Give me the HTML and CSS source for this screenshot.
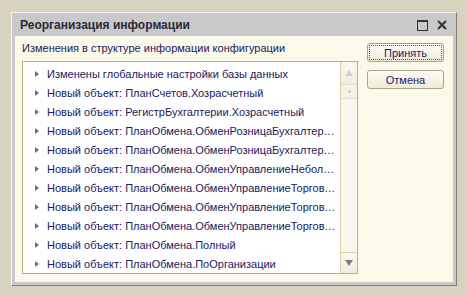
FILE: index.html
```html
<!DOCTYPE html>
<html lang="ru">
<head>
  <meta charset="UTF-8" />
  <title>Реорганизация информации</title>
  <link rel="stylesheet" href="styles.css">
</head>
<body>
<div class="window">
  <div class="titlebar">
    <span class="title">Реорганизация информации</span>
    <span class="title-btns">
      <svg width="11" height="11" viewBox="0 0 11 11"><rect x="0.5" y="0.5" width="10" height="10" fill="none" stroke="#333" stroke-width="1"/><line x1="0" y1="1.5" x2="11" y2="1.5" stroke="#333" stroke-width="1"/></svg>
      <svg width="10" height="10" viewBox="0 0 10 10"><path d="M1 1 L9 9 M9 1 L1 9" stroke="#333" stroke-width="2"/></svg>
    </span>
  </div>
  <div class="content">
    <div class="main-col">
      <div class="caption">Изменения в структуре информации конфигурации</div>
      <div class="listbox">
        <ul class="rows">
          <li><span class="arrow"></span><span class="txt">Изменены глобальные настройки базы данных</span></li>
          <li><span class="arrow"></span><span class="txt">Новый объект: ПланСчетов.Хозрасчетный</span></li>
          <li><span class="arrow"></span><span class="txt">Новый объект: РегистрБухгалтерии.Хозрасчетный</span></li>
          <li><span class="arrow"></span><span class="txt">Новый объект: ПланОбмена.ОбменРозницаБухгалтерияКОРП</span></li>
          <li><span class="arrow"></span><span class="txt">Новый объект: ПланОбмена.ОбменРозницаБухгалтерияПредприятия</span></li>
          <li><span class="arrow"></span><span class="txt">Новый объект: ПланОбмена.ОбменУправлениеНебольшойФирмой</span></li>
          <li><span class="arrow"></span><span class="txt">Новый объект: ПланОбмена.ОбменУправлениеТорговлей</span></li>
          <li><span class="arrow"></span><span class="txt">Новый объект: ПланОбмена.ОбменУправлениеТорговлейБухгалтерия</span></li>
          <li><span class="arrow"></span><span class="txt">Новый объект: ПланОбмена.ОбменУправлениеТорговлейРозница</span></li>
          <li><span class="arrow"></span><span class="txt">Новый объект: ПланОбмена.Полный</span></li>
          <li><span class="arrow"></span><span class="txt">Новый объект: ПланОбмена.ПоОрганизации</span></li>
        </ul>
        <div class="scrollbar">
          <div class="sb-btn sb-up"><span class="tri-up"></span></div>
          <div class="sb-thumb"><span class="dot"></span></div>
          <div class="sb-track"></div>
          <div class="sb-btn sb-down"><span class="tri-down"></span></div>
        </div>
      </div>
    </div>
    <div class="btn-col">
      <button class="btn default"><span>Принять</span></button>
      <button class="btn">Отмена</button>
    </div>
  </div>
</div>
</body>
</html>
```
FILE: styles.css
```css
body {
  margin: 0;
  background-color: #d7d3bf;
  font-family: Tahoma, "DejaVu Sans", "Liberation Sans", sans-serif;
  font-size: 11px;
}

.window {
  margin: 12px 0 0 11px;
  width: 446px;
  height: 274px;
  box-sizing: border-box;
  background-color: #c9c9c9;
  border-top: 1px solid #f4f4f4;
  border-left: 1px solid #f4f4f4;
  border-right: 1px solid #7f7f7f;
  border-bottom: 1px solid #7f7f7f;
  padding: 0 3px 3px 3px;
  display: flex;
  flex-direction: column;
}

.titlebar {
  height: 22px;
  display: flex;
  align-items: center;
  justify-content: space-between;
  padding: 1px 6px 0 5px;
}

.title {
  font-family: "Liberation Sans", Arial, sans-serif;
  font-weight: bold;
  font-size: 12px;
  color: #2a2a3a;
}

.title-btns {
  display: flex;
  align-items: center;
  gap: 9px;
}

.title-btns svg {
  display: block;
}

.content {
  flex: 1;
  background-color: #fbf9e9;
  display: flex;
  padding: 6px 8px 8px 7px;
  gap: 9px;
}

.main-col {
  width: 336px;
  display: flex;
  flex-direction: column;
}

.caption {
  font-family: "Liberation Sans", Arial, sans-serif;
  color: #20205e;
  line-height: 13px;
  height: 13px;
  margin-bottom: 6px;
}

.listbox {
  flex: 1;
  border: 1px solid #bdb07c;
  background: #ffffff;
  display: flex;
  min-height: 0;
}

.rows {
  list-style: none;
  margin: 0;
  padding: 2px 0 0 0;
  flex: 1;
  min-width: 0;
  overflow: hidden;
}

.rows li {
  height: 19px;
  display: flex;
  align-items: center;
  padding-left: 12px;
}

.arrow {
  width: 0;
  height: 0;
  border-top: 3px solid transparent;
  border-bottom: 3px solid transparent;
  border-left: 4px solid #4a76a8;
  margin-right: 8px;
  flex: none;
}

.txt {
  font-family: "Liberation Sans", Arial, sans-serif;
  color: #20205e;
  white-space: nowrap;
  overflow: hidden;
  text-overflow: ellipsis;
  padding-right: 2px;
}

.scrollbar {
  width: 16px;
  flex: none;
  border-left: 1px solid #d8cfaa;
  background: #f8f7f0;
  display: flex;
  flex-direction: column;
}

.sb-btn {
  background: linear-gradient(to bottom, #faf9f1, #f0eddc);
  display: flex;
  align-items: center;
  justify-content: center;
}

.sb-up {
  height: 22px;
  border-bottom: 1px solid #e4dfc6;
}

.sb-down {
  height: 20px;
  border-top: 1px solid #d8cfaa;
}

.sb-thumb {
  height: 13px;
  border-bottom: 1px solid #e4dfc6;
  background: #f4f2e6;
  display: flex;
  align-items: center;
  justify-content: center;
}

.dot {
  width: 3px;
  height: 3px;
  border-radius: 50%;
  background: #c9c6b8;
}

.sb-track {
  flex: 1;
}

.tri-up {
  width: 0;
  height: 0;
  border-left: 4px solid transparent;
  border-right: 4px solid transparent;
  border-bottom: 6px solid #cfd0cc;
}

.tri-down {
  width: 0;
  height: 0;
  border-left: 4px solid transparent;
  border-right: 4px solid transparent;
  border-top: 6px solid #7d7d7d;
}

.btn-col {
  display: flex;
  flex-direction: column;
  gap: 8px;
  padding-top: 1px;
}

.btn {
  width: 77px;
  height: 19px;
  padding: 0;
  border: 1px solid #aaa48a;
  border-radius: 3px;
  background: linear-gradient(to bottom, #fdfcf5, #efebd8);
  font-family: "Liberation Sans", Arial, sans-serif;
  font-size: 11px;
  color: #20205e;
  display: flex;
  align-items: center;
  justify-content: center;
}

.btn.default span {
  display: flex;
  align-items: center;
  justify-content: center;
  width: 71px;
  height: 13px;
  border: 1px dotted #555;
}
```
